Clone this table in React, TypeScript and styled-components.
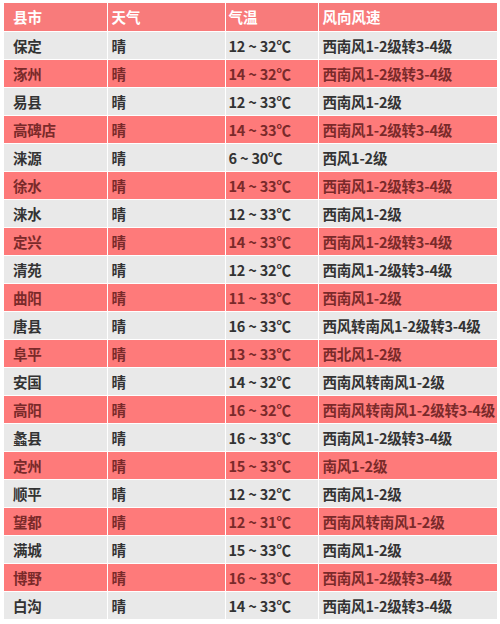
import React from "react";
import styled, { createGlobalStyle } from "styled-components";

const GlobalStyle = createGlobalStyle`
  html, body {
    margin: 0;
    padding: 0;
    background: #ffffff;
  }
  body {
    font-family: "Noto Sans CJK SC", "Noto Sans", sans-serif;
  }
`;

const Page = styled.div`
  width: 500px;
  height: 624px;
  overflow: hidden;
  padding: 3px 3px 0 4px;
  box-sizing: border-box;
`;

const Table = styled.table`
  width: 493px;
  border-collapse: collapse;
  table-layout: fixed;
`;

const HeadCell = styled.th<{ $pad: number }>`
  height: 28px;
  padding: 0 0 0 ${(p) => p.$pad}px;
  background: #f87b7b;
  color: #ffffff;
  font-size: 14.5px;
  font-weight: 700;
  text-align: left;
  border-right: 1px solid #ffffff;
  border-bottom: 1px solid #ffffff;
  box-sizing: border-box;
  &:last-child {
    border-right: none;
  }
`;

const Row = styled.tr<{ $hot: boolean }>`
  background: ${(p) => (p.$hot ? "#fe7a7a" : "#e9e9e9")};
  color: ${(p) => (p.$hot ? "#7a2a2a" : "#333333")};
`;

const Cell = styled.td<{ $pad: number }>`
  height: 28px;
  padding: 0 0 0 ${(p) => p.$pad}px;
  font-size: 14.5px;
  font-weight: 700;
  letter-spacing: -0.2px;
  white-space: nowrap;
  overflow: visible;
  border-right: 1px solid #ffffff;
  border-bottom: 1px solid #ffffff;
  box-sizing: border-box;
  &:last-child {
    border-right: none;
  }
`;

const columns = [
  { title: "县市", width: 103, pad: 9 },
  { title: "天气", width: 118, pad: 4 },
  { title: "气温", width: 93, pad: 3 },
  { title: "风向风速", width: 179, pad: 4 },
];

const rows: [string, string, string, string][] = [
  ["保定", "晴", "12 ~ 32℃", "西南风1-2级转3-4级"],
  ["涿州", "晴", "14 ~ 32℃", "西南风1-2级转3-4级"],
  ["易县", "晴", "12 ~ 33℃", "西南风1-2级"],
  ["高碑店", "晴", "14 ~ 33℃", "西南风1-2级转3-4级"],
  ["涞源", "晴", "6 ~ 30℃", "西风1-2级"],
  ["徐水", "晴", "14 ~ 33℃", "西南风1-2级转3-4级"],
  ["涞水", "晴", "12 ~ 33℃", "西南风1-2级"],
  ["定兴", "晴", "14 ~ 33℃", "西南风1-2级转3-4级"],
  ["清苑", "晴", "12 ~ 32℃", "西南风1-2级转3-4级"],
  ["曲阳", "晴", "11 ~ 33℃", "西南风1-2级"],
  ["唐县", "晴", "16 ~ 33℃", "西风转南风1-2级转3-4级"],
  ["阜平", "晴", "13 ~ 33℃", "西北风1-2级"],
  ["安国", "晴", "14 ~ 32℃", "西南风转南风1-2级"],
  ["高阳", "晴", "16 ~ 32℃", "西南风转南风1-2级转3-4级"],
  ["蠡县", "晴", "16 ~ 33℃", "西南风1-2级转3-4级"],
  ["定州", "晴", "15 ~ 33℃", "南风1-2级"],
  ["顺平", "晴", "12 ~ 32℃", "西南风1-2级"],
  ["望都", "晴", "12 ~ 31℃", "西南风转南风1-2级"],
  ["满城", "晴", "15 ~ 33℃", "西南风1-2级"],
  ["博野", "晴", "16 ~ 33℃", "西南风1-2级转3-4级"],
  ["白沟", "晴", "14 ~ 33℃", "西南风1-2级转3-4级"],
];

export default function App() {
  return (
    <>
      <GlobalStyle />
      <Page>
        <Table>
          <colgroup>
            {columns.map((c) => (
              <col key={c.title} style={{ width: c.width }} />
            ))}
          </colgroup>
          <thead>
            <tr>
              {columns.map((c) => (
                <HeadCell key={c.title} $pad={c.pad}>
                  {c.title}
                </HeadCell>
              ))}
            </tr>
          </thead>
          <tbody>
            {rows.map((r, i) => (
              <Row key={r[0]} $hot={i % 2 === 1}>
                {r.map((v, j) => (
                  <Cell key={j} $pad={columns[j].pad}>
                    {v}
                  </Cell>
                ))}
              </Row>
            ))}
          </tbody>
        </Table>
      </Page>
    </>
  );
}
